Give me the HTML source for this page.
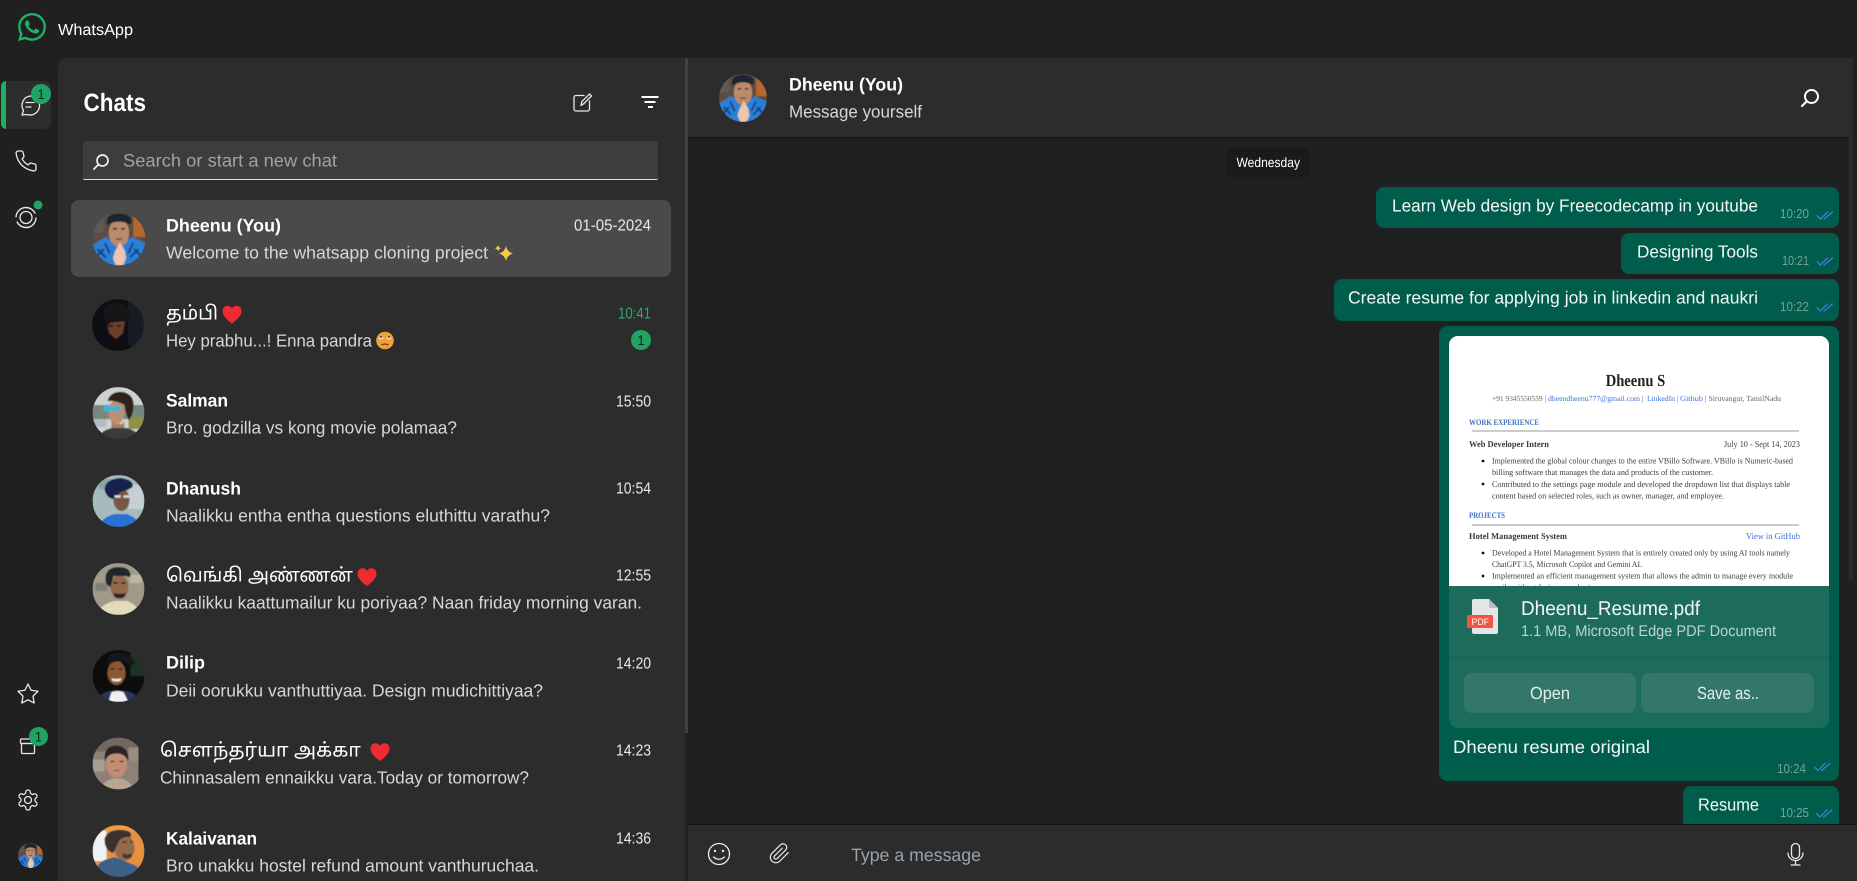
<!DOCTYPE html>
<html lang="en"><head><meta charset="utf-8"><title>WhatsApp</title>
<style>
html,body{margin:0;padding:0;width:1857px;height:881px;overflow:hidden;background:#202020}
.b{position:absolute}
svg.o{position:absolute;left:0;top:0}
text{font-family:"Liberation Sans","Noto Sans Tamil","Noto Sans CJK SC",sans-serif;fill:#fff;text-rendering:geometricPrecision}
.n{font-size:18px;font-weight:700}
.m{font-size:17.5px;fill:#d3d8dc}
.t{font-size:16px;fill:#e8e8e8}
.tm{font-size:13px;fill:#74a297}
.bt{font-size:17.5px;fill:#f4f8f6}
.s{stroke:#e8e8e8;stroke-width:1.3;fill:none;stroke-linecap:round;stroke-linejoin:round}
.r text{font-family:"Liberation Serif",serif}
</style></head><body>
<div class="b" style="left:58px;top:58px;width:627px;height:823px;background:#2c2c2c;border-top-left-radius:9px"></div>
<div class="b" style="left:685px;top:58px;width:3px;height:675px;background:#414141"></div>
<div class="b" style="left:1px;top:81px;width:50px;height:48px;background:#2d2d2d;border-radius:7px"></div>
<div class="b" style="left:1px;top:81px;width:5px;height:48px;background:#1db05f;border-radius:5px 0 0 5px"></div>
<div class="b" style="left:83px;top:141px;width:575px;height:38px;background:#3d3d3d;border-bottom:1.5px solid #dcdcdc;border-radius:3px 3px 2px 2px"></div>
<div class="b" style="left:71px;top:200px;width:600px;height:77px;background:#4a4a4a;border-radius:8px"></div>
<div class="b" style="left:688px;top:58px;width:1161px;height:79px;background:#2c2c2c;border-bottom:1px solid #141414"></div>
<div class="b" style="left:1849px;top:58px;width:4px;height:522px;background:#2a2a2a"></div>
<div class="b" style="left:1226px;top:148px;width:84px;height:29px;background:#1a1a1a;border-radius:4px"></div>
<div class="b" style="left:1376px;top:187px;width:463px;height:41px;background:#005c4b;border-radius:8px"></div>
<div class="b" style="left:1621px;top:233px;width:218px;height:41px;background:#005c4b;border-radius:8px"></div>
<div class="b" style="left:1334px;top:279px;width:505px;height:42px;background:#005c4b;border-radius:8px"></div>
<div class="b" style="left:1439px;top:326px;width:400px;height:455px;background:#005c4b;border-radius:8px"></div>
<div class="b" style="left:1449px;top:336px;width:380px;height:250px;background:#fff;border-radius:9px 9px 0 0"></div>
<div class="b" style="left:1449px;top:586px;width:380px;height:142px;background:#1d6b5b;border-radius:0 0 9px 9px"></div>
<div class="b" style="left:1449px;top:657px;width:380px;height:1px;background:#195f50"></div>
<div class="b" style="left:1464px;top:673px;width:172px;height:40px;background:#33776a;border-radius:8px"></div>
<div class="b" style="left:1641px;top:673px;width:173px;height:40px;background:#33776a;border-radius:8px"></div>
<div class="b" style="left:1683px;top:786px;width:156px;height:45px;background:#005c4b;border-radius:8px"></div>
<div class="b" style="left:688px;top:824px;width:1169px;height:57px;background:#2c2c2c;border-top:1px solid #141414;box-sizing:border-box"></div>

<svg class="o" width="1857" height="881" viewBox="0 0 1857 881" xmlns="http://www.w3.org/2000/svg">
<defs>
<filter id="bl" x="-10%" y="-10%" width="120%" height="120%"><feGaussianBlur stdDeviation=".65"/></filter>
<filter id="bs" x="-2%" y="-2%" width="104%" height="104%"><feGaussianBlur stdDeviation=".34"/></filter>
<clipPath id="cc"><circle cx="26" cy="26" r="26"/></clipPath>
<clipPath id="imgc"><rect x="1449" y="336" width="380" height="250"/></clipPath>
<symbol id="a1" viewBox="0 0 52 52"><g clip-path="url(#cc)"><g filter="url(#bl)"><rect width="52" height="52" fill="#5e4c42"/><rect x="40" y="0" width="12" height="24" fill="#b5682f"/><rect x="0" y="0" width="11" height="20" fill="#5d5a52"/><path d="M0 32L13 24 22 30 30 30 39 24 52 30V52H0z" fill="#2a7fd6"/><path d="M5 36l8 8M45 36l-8 8M12 30l5 10M40 30l-5 10M3 44l8-8M49 44l-8-8" stroke="#123b7a" stroke-width="1.800"/><ellipse cx="26" cy="20" rx="10" ry="13.500" fill="#bb8a6c"/><path d="M14 11Q13 1 26 1T38 10Q38 12 35 11 26 7 17 11 14 14 14 11z" fill="#1f2630"/><path d="M20 16h4M28 16h4" stroke="#3a2a22" stroke-width="1.500"/><path d="M23 26h6" stroke="#6e3d30" stroke-width="1.300"/><path d="M22 38L27 29 32 38 33 45 30 52H23L20 45z" fill="#ecc5ac"/></g></g></symbol>
<symbol id="a2" viewBox="0 0 52 52"><g clip-path="url(#cc)"><g filter="url(#bl)"><rect width="52" height="52" fill="#0d1119"/><rect x="36" width="16" height="52" fill="#161b22"/><path d="M15 24L33 22 31 34 24 40 17 34z" fill="#6a3f2e"/><path d="M12 20Q8 6 22 4 36 3 38 16L34 26 31 20 20 22 15 28z" fill="#121216"/><path d="M17 27h4M25 27h4" stroke="#150d0c" stroke-width="1.400"/><path d="M10 52Q12 42 24 40 36 40 40 52z" fill="#090909"/></g></g></symbol>
<symbol id="a3" viewBox="0 0 52 52"><g clip-path="url(#cc)"><g filter="url(#bl)"><rect width="52" height="52" fill="#ccd2d2"/><rect y="18" width="52" height="14" fill="#78877e"/><rect x="36" y="30" width="16" height="12" fill="#8f8f45"/><rect y="32" width="14" height="8" fill="#b5bdc0"/><ellipse cx="24" cy="25" rx="8" ry="12" fill="#bb9072"/><path d="M15 14Q18 4 30 5 42 7 41 20 40 30 36 33 33 26 32 18 24 13 15 14z" fill="#2d241f"/><path d="M11 19l8 0 1 4-6 2-3-2zM20 19h8v3l-4 3-4-2z" fill="#35b7d8"/><path d="M19 33l3 4h8l2-3v8H19z" fill="#a97f64"/><path d="M6 52Q8 43 20 41L34 41Q46 44 48 52z" fill="#3a3a3a"/></g></g></symbol>
<symbol id="a4" viewBox="0 0 52 52"><g clip-path="url(#cc)"><g filter="url(#bl)"><rect width="52" height="52" fill="#a6bcbc"/><rect y="10" x="36" width="16" height="24" fill="#c6d0d2"/><rect x="6" y="4" width="14" height="10" fill="#8aa5a5"/><ellipse cx="29" cy="25" rx="8" ry="11" fill="#7a5644"/><path d="M12 14Q13 4 28 3 42 5 40 12 36 15 28 17L22 24Q14 24 12 14z" fill="#14234d"/><path d="M22 21.500h6m3 0h6" stroke="#d8dde0" stroke-width="2.400"/><path d="M6 52Q8 43 22 39H34Q46 43 48 52z" fill="#2a70d4"/></g></g></symbol>
<symbol id="a5" viewBox="0 0 52 52"><g clip-path="url(#cc)"><g filter="url(#bl)"><rect width="52" height="52" fill="#a09a8a"/><rect x="3" y="20" width="12" height="8" fill="#7e8076"/><rect x="37" y="12" width="12" height="8" fill="#bdb7a8"/><ellipse cx="27" cy="24" rx="9" ry="12" fill="#94694e"/><path d="M13 16Q13 4 26 4 39 4 38 14L33 13 21 13 18 24Q13 22 13 16z" fill="#24252a"/><path d="M21 20h4M29 20h4" stroke="#241a16" stroke-width="1.400"/><path d="M21 30q6 2 12 0l-1 4q-5 2-10 0z" fill="#2b2420"/><path d="M4 52Q8 41 22 38H34Q46 42 48 52z" fill="#e4dbbd"/></g></g></symbol>
<symbol id="a6" viewBox="0 0 52 52"><g clip-path="url(#cc)"><g filter="url(#bl)"><rect width="52" height="52" fill="#0b0e0a"/><rect x="38" y="0" width="14" height="26" fill="#1f3020"/><ellipse cx="24" cy="23" rx="9" ry="12" fill="#8c5835"/><path d="M14 14Q15 3 26 3 40 3 42 14 37 17 33 12 24 10 17 14z" fill="#14161f"/><path d="M18 19h4M26 19h4" stroke="#211310" stroke-width="1.300"/><path d="M19 28q5 2 10 0l-1 3q-4 1-8 0z" fill="#eee"/><path d="M4 52Q8 43 17 41H34Q44 43 48 52z" fill="#2a3560"/><path d="M16 52L19 42Q25 40 31 42L36 52z" fill="#f0f0f0"/></g></g></symbol>
<symbol id="a7" viewBox="0 0 52 52"><g clip-path="url(#cc)"><g filter="url(#bl)"><rect width="52" height="52" fill="#8d8178"/><rect width="46" height="14" fill="#736860"/><rect y="22" width="12" height="12" fill="#a79f95"/><rect x="36" y="10" width="10" height="14" fill="#9c8c80"/><ellipse cx="24" cy="27" rx="10.500" ry="13" fill="#c28e72"/><path d="M12 24Q11 8 24 8 37 9 36 24 33 16 24 16 15 16 12 24z" fill="#2a2226"/><path d="M18 24h4M27 24h4" stroke="#3c2823" stroke-width="1.300"/><path d="M21 33h6" stroke="#8a4f46" stroke-width="1.200"/><path d="M8 52Q10 44 20 41H29Q38 44 42 52z" fill="#b8a692"/></g><rect x="46" width="6" height="52" fill="#2c2c2c"/></g></symbol>
<symbol id="a8" viewBox="0 0 52 52"><g clip-path="url(#cc)"><g filter="url(#bl)"><rect width="52" height="52" fill="#e6913f"/><rect width="14" height="36" fill="#eef2f4"/><rect y="0" x="10" width="42" height="6" fill="#ee9c45"/><ellipse cx="32" cy="23" rx="10" ry="13" fill="#946a50"/><path d="M12 14Q15 4 30 5 41 6 38 12 28 11 25 19L21 28Q12 26 12 14z" fill="#3a332e"/><path d="M30 17h4M37 17h3" stroke="#2a1c16" stroke-width="1.300"/><path d="M30 28q5 3 9 0v4q-4 3-9 0z" fill="#4a3429"/><path d="M2 52Q2 40 12 35L22 32 42 40Q50 44 50 52z" fill="#3d5f88"/></g></g></symbol>
<path id="tk" d="M0 3.600l3.400 3.400L10.500 0M7 7L15.500 0" fill="none" stroke="#3d7ed6" stroke-width="1.300" stroke-linecap="round"/>
<path id="hrt" d="M10 18.500C4 14 .5 10.500.5 6 .5 3 2.800.8 5.500.8 7.400.8 9 1.800 10 3.500 11 1.800 12.600.8 14.500.8 17.200.8 19.500 3 19.500 6 19.500 10.500 16 14 10 18.500z" fill="#ee2b33"/>
</defs>

<!-- title bar -->
<g transform="translate(18 13) scale(1.167)"><path fill="#1fb264" d="M17.472 14.382c-.297-.149-1.758-.867-2.03-.967-.273-.099-.471-.148-.67.15-.197.297-.767.966-.94 1.164-.173.199-.347.223-.644.075-.297-.15-1.255-.463-2.39-1.475-.883-.788-1.48-1.761-1.653-2.059-.173-.297-.018-.458.13-.606.134-.133.298-.347.446-.52.149-.174.198-.298.298-.497.099-.198.05-.371-.025-.52-.075-.149-.669-1.612-.916-2.207-.242-.579-.487-.5-.669-.51-.173-.008-.371-.01-.57-.01-.198 0-.52.074-.792.372-.272.297-1.04 1.016-1.04 2.479 0 1.462 1.065 2.875 1.213 3.074.149.198 2.096 3.2 5.077 4.487.709.306 1.262.489 1.694.625.712.227 1.36.195 1.871.118.571-.085 1.758-.719 2.006-1.413.248-.694.248-1.289.173-1.413-.074-.124-.272-.198-.57-.347m-5.421 7.403h-.004a9.87 9.87 0 01-5.031-1.378l-.361-.214-3.741.982.998-3.648-.235-.374a9.86 9.86 0 01-1.51-5.26c.001-5.45 4.436-9.884 9.888-9.884 2.64 0 5.122 1.03 6.988 2.898a9.825 9.825 0 012.893 6.994c-.003 5.45-4.437 9.884-9.885 9.884m8.413-18.297A11.815 11.815 0 0012.05 0C5.495 0 .16 5.335.157 11.892c0 2.096.547 4.142 1.588 5.945L.057 24l6.305-1.654a11.882 11.882 0 005.683 1.448h.005c6.554 0 11.89-5.335 11.893-11.893a11.821 11.821 0 00-3.48-8.413z"/></g>
<text x="58" y="35" font-size="16" textLength="75" lengthAdjust="spacingAndGlyphs">WhatsApp</text>

<!-- rail -->
<path class="s" d="M30 96a9.500 9.500 0 1 1-3 18.500l-5 .5 1.500-4.500A9.500 9.500 0 0 1 30 96z"/>
<path class="s" d="M26 102.500h8M26 107h5"/>
<circle cx="41" cy="94" r="10" fill="#1fa463"/><text x="37.500" y="99" font-size="14" style="fill:#0d1f16" textLength="7" lengthAdjust="spacingAndGlyphs">1</text>
<g transform="translate(14 149)"><path class="s" stroke-width="1.200" d="M22 16.920v3a2 2 0 0 1-2.180 2 19.790 19.790 0 0 1-8.630-3.070 19.500 19.500 0 0 1-6-6 19.790 19.790 0 0 1-3.070-8.670A2 2 0 0 1 4.110 2h3a2 2 0 0 1 2 1.720 12.840 12.840 0 0 0 .7 2.810 2 2 0 0 1-.45 2.110L8.090 9.910a16 16 0 0 0 6 6l1.270-1.270a2 2 0 0 1 2.110-.45 12.840 12.840 0 0 0 2.810.7A2 2 0 0 1 22 16.920z"/></g>
<circle class="s" cx="26" cy="217.500" r="6"/><circle cx="26" cy="217.500" r="10" fill="none" stroke="#e8e8e8" stroke-width="1.400" stroke-dasharray="27 4.400"/>
<circle cx="38" cy="205" r="4.500" fill="#1fa463"/>
<g transform="translate(16 682)"><path class="s" d="M12 2 15.090 8.260 22 9.270 17 14.140 18.180 21.020 12 17.770 5.820 21.020 7 14.140 2 9.270 8.910 8.260 12 2z"/></g>
<rect class="s" x="20.500" y="739" width="15" height="4.500" rx="1"/><rect class="s" x="21.500" y="743.500" width="13" height="10" rx="1"/>
<circle cx="38.500" cy="736.500" r="9.500" fill="#1fa463"/><text x="35" y="741.500" font-size="14" style="fill:#0d1f16" textLength="7" lengthAdjust="spacingAndGlyphs">1</text>
<g transform="translate(16 788)"><path class="s" d="M12.220 2h-.44a2 2 0 0 0-2 2v.18a2 2 0 0 1-1 1.730l-.43.25a2 2 0 0 1-2 0l-.15-.08a2 2 0 0 0-2.730.73l-.22.38a2 2 0 0 0 .73 2.730l.15.1a2 2 0 0 1 1 1.720v.51a2 2 0 0 1-1 1.740l-.15.09a2 2 0 0 0-.73 2.730l.22.38a2 2 0 0 0 2.730.73l.15-.08a2 2 0 0 1 2 0l.43.25a2 2 0 0 1 1 1.730V20a2 2 0 0 0 2 2h.44a2 2 0 0 0 2-2v-.18a2 2 0 0 1 1-1.730l.43-.25a2 2 0 0 1 2 0l.15.08a2 2 0 0 0 2.730-.73l.22-.39a2 2 0 0 0-.73-2.730l-.15-.08a2 2 0 0 1-1-1.740v-.5a2 2 0 0 1 1-1.740l.15-.09a2 2 0 0 0 .73-2.730l-.22-.38a2 2 0 0 0-2.730-.73l-.15.08a2 2 0 0 1-2 0l-.43-.25a2 2 0 0 1-1-1.730V4a2 2 0 0 0-2-2z"/><circle class="s" cx="12" cy="12" r="3.500"/></g>
<use href="#a1" x="18" y="843" width="25" height="25"/>

<!-- chats header -->
<text x="83.500" y="111" font-size="25" font-weight="700" textLength="62.500" lengthAdjust="spacingAndGlyphs">Chats</text>
<path class="s" d="M584 95.500h-8a2 2 0 0 0-2 2v11.500a2 2 0 0 0 2 2h11.500a2 2 0 0 0 2-2v-8"/><path class="s" d="M581 105.500l.8-3.800 7.700-7.700 2 2-7.700 7.700z"/>
<path d="M641.500 97h17M644.500 102h11M648 107h5" stroke="#fff" stroke-width="2" fill="none"/>
<circle cx="102.500" cy="160.500" r="5.500" fill="none" stroke="#f0f0f0" stroke-width="1.700"/><path d="M98.500 164.500l-4.500 4.500" stroke="#f0f0f0" stroke-width="1.800" stroke-linecap="round"/>
<text x="123" y="166.500" font-size="18" style="fill:#a3a3a3" textLength="214" lengthAdjust="spacingAndGlyphs">Search or start a new chat</text>

<!-- rows -->
<use href="#a1" x="92.500" y="212.500" width="53" height="53"/>
<text class="n" x="166" y="231.500" textLength="115" lengthAdjust="spacingAndGlyphs">Dheenu (You)</text>
<text class="t" x="574" y="230.500" textLength="77" lengthAdjust="spacingAndGlyphs">01-05-2024</text>
<text class="m" x="166" y="258.500" textLength="322" lengthAdjust="spacingAndGlyphs">Welcome to the whatsapp cloning project</text>
<path d="M506 246q1.300 6 7 7.500-5.700 1.500-7 7.500-1.300-6-7-7.500 5.700-1.500 7-7.500zM498 245q.6 2.500 3 3.200-2.400.7-3 3.200-.6-2.500-3-3.200 2.400-.7 3-3.200z" fill="#f7c948"/>

<use href="#a2" x="92" y="299" width="52" height="52"/>
<text x="166" y="319.500" font-size="19" textLength="52" lengthAdjust="spacingAndGlyphs">தம்பி</text>
<use href="#hrt" x="222" y="305"/>
<text class="t" x="618" y="318.500" style="fill:#1fb264" textLength="33" lengthAdjust="spacingAndGlyphs">10:41</text>
<text class="m" x="166" y="346.500" textLength="206" lengthAdjust="spacingAndGlyphs">Hey prabhu...! Enna pandra</text>
<circle cx="385" cy="340.500" r="8.800" fill="#f2a03a"/><path d="M378.500 338q2.500-2 5 0-2.500 2-5 0zM386.500 338q2.500-2 5 0-2.500 2-5 0z" fill="#fff"/><circle cx="381" cy="337" r="1" fill="#333"/><circle cx="389" cy="337" r="1" fill="#333"/><path d="M381.500 345q3.500-2 7 0" stroke="#6a3c10" stroke-width="1.200" fill="none"/>
<circle cx="641" cy="340" r="10" fill="#1fa463"/><text x="637.500" y="345" font-size="14" style="fill:#0d1f16" textLength="7" lengthAdjust="spacingAndGlyphs">1</text>

<use href="#a3" x="92.500" y="387" width="52" height="52"/>
<text class="n" x="166" y="406.500" textLength="62" lengthAdjust="spacingAndGlyphs">Salman</text>
<text class="t" x="616" y="406.500" textLength="35" lengthAdjust="spacingAndGlyphs">15:50</text>
<text class="m" x="166" y="433.500" textLength="291" lengthAdjust="spacingAndGlyphs">Bro. godzilla vs kong movie polamaa?</text>

<use href="#a4" x="92.500" y="475" width="52" height="52"/>
<text class="n" x="166" y="494.500" textLength="75" lengthAdjust="spacingAndGlyphs">Dhanush</text>
<text class="t" x="616" y="493.500" textLength="35" lengthAdjust="spacingAndGlyphs">10:54</text>
<text class="m" x="166" y="521.500" textLength="384" lengthAdjust="spacingAndGlyphs">Naalikku entha entha questions eluthittu varathu?</text>

<use href="#a5" x="92.500" y="563" width="52" height="52"/>
<text x="166" y="581.500" font-size="19" textLength="187" lengthAdjust="spacingAndGlyphs">வெங்கி அண்ணன்</text>
<use href="#hrt" x="357" y="567.500"/>
<text class="t" x="616" y="580.500" textLength="35" lengthAdjust="spacingAndGlyphs">12:55</text>
<text class="m" x="166" y="608.500" textLength="476" lengthAdjust="spacingAndGlyphs">Naalikku kaattumailur ku poriyaa? Naan friday morning varan.</text>

<use href="#a6" x="92.500" y="650" width="52" height="52"/>
<text class="n" x="166" y="668.500" textLength="39" lengthAdjust="spacingAndGlyphs">Dilip</text>
<text class="t" x="616" y="668.500" textLength="35" lengthAdjust="spacingAndGlyphs">14:20</text>
<text class="m" x="166" y="696.500" textLength="377" lengthAdjust="spacingAndGlyphs">Deii oorukku vanthuttiyaa. Design mudichittiyaa?</text>

<use href="#a7" x="92.500" y="737.500" width="52" height="52"/>
<text x="160" y="756.500" font-size="19" textLength="201" lengthAdjust="spacingAndGlyphs">சௌந்தர்யா அக்கா</text>
<use href="#hrt" x="370" y="742.500"/>
<text class="t" x="616" y="755.500" textLength="35" lengthAdjust="spacingAndGlyphs">14:23</text>
<text class="m" x="160" y="783.500" textLength="369" lengthAdjust="spacingAndGlyphs">Chinnasalem ennaikku vara.Today or tomorrow?</text>

<use href="#a8" x="92.500" y="825" width="52" height="52"/>
<text class="n" x="166" y="844.500" textLength="91" lengthAdjust="spacingAndGlyphs">Kalaivanan</text>
<text class="t" x="616" y="843.500" textLength="35" lengthAdjust="spacingAndGlyphs">14:36</text>
<text class="m" x="166" y="871.500" textLength="373" lengthAdjust="spacingAndGlyphs">Bro unakku hostel refund amount vanthuruchaa.</text>

<!-- chat header -->
<use href="#a1" x="719" y="74" width="48" height="48"/>
<text class="n" x="789" y="90.500" textLength="114" lengthAdjust="spacingAndGlyphs">Dheenu (You)</text>
<text class="m" x="789" y="117.500" textLength="133" lengthAdjust="spacingAndGlyphs">Message yourself</text>
<circle cx="1811.500" cy="96.500" r="6.500" fill="none" stroke="#fff" stroke-width="2"/><path d="M1806.500 101.500l-4.500 4.500" stroke="#fff" stroke-width="2.200" stroke-linecap="round"/>
<text x="1236.500" y="167" font-size="13.500" textLength="63.500" lengthAdjust="spacingAndGlyphs">Wednesday</text>

<!-- messages -->
<text class="bt" x="1392" y="211.500" textLength="366" lengthAdjust="spacingAndGlyphs">Learn Web design by Freecodecamp in youtube</text>
<text class="tm" x="1780" y="218" textLength="29" lengthAdjust="spacingAndGlyphs">10:20</text><use href="#tk" x="1817" y="212"/>
<text class="bt" x="1637" y="257.500" textLength="121" lengthAdjust="spacingAndGlyphs">Designing Tools</text>
<text class="tm" x="1782" y="265" textLength="27" lengthAdjust="spacingAndGlyphs">10:21</text><use href="#tk" x="1817" y="258"/>
<text class="bt" x="1348" y="303.500" textLength="410" lengthAdjust="spacingAndGlyphs">Create resume for applying job in linkedin and naukri</text>
<text class="tm" x="1780" y="311" textLength="29" lengthAdjust="spacingAndGlyphs">10:22</text><use href="#tk" x="1817" y="304"/>

<!-- resume -->
<g class="r" clip-path="url(#imgc)" filter="url(#bs)">
<text x="1605.700" y="386" font-size="17" font-weight="700" style="fill:#222" textLength="59.500" lengthAdjust="spacingAndGlyphs">Dheenu S</text>
<g font-size="7.800">
<text x="1492" y="401" style="fill:#666" textLength="54" lengthAdjust="spacingAndGlyphs">+91 9345550559 |</text>
<text x="1548" y="401" style="fill:#3c73dc" textLength="92" lengthAdjust="spacingAndGlyphs">dheendheenu777@gmail.com</text>
<text x="1642" y="401" style="fill:#666">|</text>
<text x="1647" y="401" style="fill:#3c73dc" textLength="28" lengthAdjust="spacingAndGlyphs">LinkedIn</text>
<text x="1677" y="401" style="fill:#666">|</text>
<text x="1680" y="401" style="fill:#3c73dc" textLength="23" lengthAdjust="spacingAndGlyphs">Github</text>
<text x="1705" y="401" style="fill:#666" textLength="76" lengthAdjust="spacingAndGlyphs">| Siruvangur, TamilNadu</text>
</g>
<text x="1469" y="425" font-size="8.500" font-weight="700" style="fill:#3f72bf" textLength="70" lengthAdjust="spacingAndGlyphs">WORK EXPERIENCE</text>
<path d="M1472 431h327M1472 525h327" stroke="#999" stroke-width=".9"/>
<text x="1469" y="447" font-size="9" font-weight="700" style="fill:#3a3a3a" textLength="80" lengthAdjust="spacingAndGlyphs">Web Developer Intern</text>
<text x="1724" y="447" font-size="9" style="fill:#444" textLength="76" lengthAdjust="spacingAndGlyphs">July 10 - Sept 14, 2023</text>
<circle cx="1483" cy="461" r="1.400" fill="#111"/><circle cx="1483" cy="484" r="1.400" fill="#111"/><circle cx="1483" cy="553" r="1.400" fill="#111"/><circle cx="1483" cy="576" r="1.400" fill="#111"/>
<g font-size="8.400">
<text x="1492" y="463.500" style="fill:#3d3d3d" textLength="301" lengthAdjust="spacingAndGlyphs">Implemented the global colour changes to the entire VBillo Software. VBillo is Numeric-based</text>
<text x="1492" y="475" style="fill:#3d3d3d" textLength="221" lengthAdjust="spacingAndGlyphs">billing software that manages the data and products of the customer.</text>
<text x="1492" y="487" style="fill:#3d3d3d" textLength="298" lengthAdjust="spacingAndGlyphs">Contributed to the settings page module and developed the dropdown list that displays table</text>
<text x="1492" y="498.500" style="fill:#3d3d3d" textLength="232" lengthAdjust="spacingAndGlyphs">content based on selected roles, such as owner, manager, and employee.</text>
<text x="1492" y="555.500" style="fill:#3d3d3d" textLength="298" lengthAdjust="spacingAndGlyphs">Developed a Hotel Management System that is entirely created only by using AI tools namely</text>
<text x="1492" y="567" style="fill:#3d3d3d" textLength="150" lengthAdjust="spacingAndGlyphs">ChatGPT 3.5, Microsoft Copilot and Gemini AI.</text>
<text x="1492" y="578.500" style="fill:#3d3d3d" textLength="301" lengthAdjust="spacingAndGlyphs">Implemented an efficient management system that allows the admin to manage every module</text>
<text x="1492" y="590" style="fill:#3d3d3d" textLength="105" lengthAdjust="spacingAndGlyphs">easily without facing complexity.</text>
</g>
<text x="1469" y="518" font-size="8.500" font-weight="700" style="fill:#3f72bf" textLength="36" lengthAdjust="spacingAndGlyphs">PROJECTS</text>
<text x="1469" y="539" font-size="9" font-weight="700" style="fill:#3a3a3a" textLength="98" lengthAdjust="spacingAndGlyphs">Hotel Management System</text>
<text x="1746" y="539" font-size="9" style="fill:#3c73dc" textLength="54" lengthAdjust="spacingAndGlyphs">View in GitHub</text>
</g>

<!-- file card -->
<path d="M1474 599h15l9 9v24a2 2 0 0 1-2 2h-22a2 2 0 0 1-2-2v-31a2 2 0 0 1 2-2z" fill="#e3e5e8"/>
<path d="M1489 599l9 9h-7a2 2 0 0 1-2-2z" fill="#b7bbc2"/>
<rect x="1467" y="615" width="26" height="13" rx="1.500" fill="#f4553f"/>
<text x="1471.500" y="625" font-size="9.500" font-weight="400" textLength="17.500" lengthAdjust="spacingAndGlyphs">PDF</text>
<text x="1521" y="615" font-size="20" style="fill:#f2f7f5" textLength="179" lengthAdjust="spacingAndGlyphs">Dheenu_Resume.pdf</text>
<text x="1521" y="636" font-size="15.500" style="fill:#b8d6ce" textLength="255" lengthAdjust="spacingAndGlyphs">1.1 MB, Microsoft Edge PDF Document</text>
<text x="1530" y="699" font-size="17.500" style="fill:#e2efeb" textLength="40" lengthAdjust="spacingAndGlyphs">Open</text>
<text x="1697" y="699" font-size="17.500" style="fill:#e2efeb" textLength="62" lengthAdjust="spacingAndGlyphs">Save as..</text>
<text class="bt" x="1453" y="753" style="font-size:18px" textLength="197" lengthAdjust="spacingAndGlyphs">Dheenu resume original</text>
<text class="tm" x="1777" y="773" textLength="29" lengthAdjust="spacingAndGlyphs">10:24</text><use href="#tk" x="1814.500" y="763.500"/>
<text class="bt" x="1698" y="810.500" textLength="61" lengthAdjust="spacingAndGlyphs">Resume</text>
<text class="tm" x="1780" y="817" textLength="29" lengthAdjust="spacingAndGlyphs">10:25</text><use href="#tk" x="1816.500" y="810"/>

<!-- footer -->
<circle cx="719" cy="854" r="10.500" fill="none" stroke="#ededed" stroke-width="1.300"/><circle cx="715" cy="851" r="1.200" fill="#ededed"/><circle cx="723" cy="851" r="1.200" fill="#ededed"/><path class="s" d="M713.500 857q5.500 4.500 11 0"/>
<g transform="translate(768.500 842.500) scale(.92)"><path class="s" d="M21.440 11.050l-9.190 9.190a6 6 0 0 1-8.490-8.490l9.190-9.190a4 4 0 0 1 5.660 5.660l-9.200 9.190a2 2 0 0 1-2.830-2.830l8.490-8.480"/></g>
<text x="851" y="861" font-size="18" style="fill:#98a4ad" textLength="130" lengthAdjust="spacingAndGlyphs">Type a message</text>
<rect class="s" x="1791.500" y="843.500" width="8" height="15" rx="4"/><path class="s" d="M1788 853a7.500 7.500 0 0 0 15 0M1795.500 860.500v4M1791 865h9"/>
</svg>
</body></html>
